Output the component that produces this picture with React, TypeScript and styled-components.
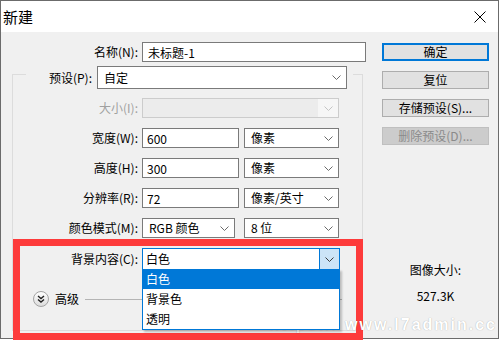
import { FC } from 'react'
import styled, { createGlobalStyle } from 'styled-components'

const GlobalStyle = createGlobalStyle`
  html, body {
    margin: 0;
    padding: 0;
    background: #ffffff;
  }
  body {
    font-family: 'Noto Sans CJK SC', 'Liberation Sans', sans-serif;
    font-size: 12px;
    line-height: 16px;
    color: #000;
  }
`

const Page = styled.div`
  position: relative;
  width: 501px;
  height: 341px;
`

const Dialog = styled.div`
  box-sizing: border-box;
  width: 499px;
  height: 339px;
  border: 1px solid #6b6b6b;
  background: #f0f0f0;
  display: flex;
  flex-direction: column;
`

const TitleBar = styled.div`
  height: 31px;
  flex: none;
  background: #ffffff;
  display: flex;
  align-items: center;
  justify-content: space-between;
  padding: 0 12px 0 2px;
`

const Title = styled.span`
  font-size: 15px;
`

const Body = styled.div`
  flex: 1;
  display: flex;
  gap: 16px;
  padding-top: 10px;
`

const LeftPane = styled.div`
  width: 365px;
  display: flex;
  flex-direction: column;
`

const Row = styled.div<{ $gap?: number }>`
  display: flex;
  align-items: center;
  gap: ${(p) => p.$gap ?? 0}px;
`

const Label = styled.label<{ $w: number; $disabled?: boolean }>`
  width: ${(p) => p.$w}px;
  flex: none;
  text-align: right;
  white-space: nowrap;
  margin-right: ${(p) => (p.$w > 100 ? 4 : 5)}px;
  color: ${(p) => (p.$disabled ? '#a0a0a0' : '#000')};
`

const Fields = styled.div<{ $gap?: number }>`
  display: flex;
  align-items: center;
  gap: ${(p) => p.$gap ?? 5}px;
`

const TextBox = styled.input<{ $w: number; $pad?: number }>`
  box-sizing: border-box;
  width: ${(p) => p.$w}px;
  height: 20px;
  margin: 0;
  border: 1px solid #7a7a7a;
  background: #ffffff;
  padding: 0 0 0 ${(p) => p.$pad ?? 4}px;
  font: inherit;
  color: #000;
  outline: none;
`

const Combo = styled.div<{ $w: number; $h?: number; $disabled?: boolean; $focused?: boolean }>`
  position: relative;
  box-sizing: border-box;
  width: ${(p) => p.$w}px;
  height: ${(p) => p.$h ?? 20}px;
  display: flex;
  align-items: stretch;
  border: 1px solid ${(p) => (p.$focused ? '#0078d7' : p.$disabled ? '#cccccc' : '#7a7a7a')};
  background: ${(p) => (p.$disabled ? '#ececec' : '#ffffff')};
`

const ComboText = styled.span<{ $pad: number }>`
  flex: 1;
  display: flex;
  align-items: center;
  padding-left: ${(p) => p.$pad}px;
  white-space: nowrap;
`

const ComboArrow = styled.span<{ $focused?: boolean; $disabled?: boolean }>`
  width: ${(p) => (p.$focused ? 19 : 19)}px;
  flex: none;
  display: flex;
  align-items: center;
  justify-content: center;
  background: ${(p) => (p.$focused ? '#cce4f7' : p.$disabled ? '#f6f6f6' : 'transparent')};
  border-left: 1px solid ${(p) => (p.$focused ? '#0078d7' : 'transparent')};
`

const DropList = styled.ul`
  position: absolute;
  top: 100%;
  left: -1px;
  right: -1px;
  margin: 0;
  padding: 0;
  list-style: none;
  background: #ffffff;
  border: 1px solid #0078d7;
  border-top: none;
  box-shadow: 2px 2px 2px rgba(0, 0, 0, 0.22);
  z-index: 3;
`

const DropItem = styled.li<{ $active?: boolean }>`
  height: 20px;
  line-height: 20px;
  padding-left: 3px;
  background: ${(p) => (p.$active ? '#0078d7' : '#ffffff')};
  color: ${(p) => (p.$active ? '#ffffff' : '#000000')};
`

const GroupBox = styled.fieldset`
  box-sizing: border-box;
  width: 351px;
  min-width: 0;
  margin: -2px 0 0 11px;
  padding: 9px 0 23px 0;
  border: 1px solid #dcdcdc;
  display: flex;
  flex-direction: column;
  gap: 10px;
`

const GroupLegend = styled.legend`
  margin-left: 13px;
  padding: 6px 6px 0 0;
`

const LegendInner = styled.span`
  display: flex;
  align-items: center;
`

const AdvancedRow = styled.div`
  display: flex;
  align-items: center;
  height: 16px;
  margin-top: 11px;
  padding-left: 20px;
`

const RoundToggle = styled.span`
  box-sizing: border-box;
  width: 16px;
  height: 16px;
  border-radius: 50%;
  border: 1px solid #a3a3a3;
  background: linear-gradient(#ffffff, #dcdcdc);
  display: flex;
  align-items: center;
  justify-content: center;
  margin-right: 6px;
`

const Divider = styled.span`
  flex: 1;
  height: 1px;
  background: #b4b4b4;
  margin: 0 20px 0 6px;
`

const RightPane = styled.div`
  width: 107px;
  display: flex;
  flex-direction: column;
  padding-top: 1px;
  gap: 10px;
`

const Button = styled.button<{ $primary?: boolean }>`
  box-sizing: border-box;
  width: 107px;
  height: 18px;
  margin: 0;
  padding: 0;
  font: inherit;
  line-height: 14px;
  color: ${(p) => (p.disabled ? '#8a8a8a' : '#000')};
  background: ${(p) => (p.disabled ? '#cccccc' : '#e1e1e1')};
  border: ${(p) => (p.$primary ? '2px solid #0078d7' : p.disabled ? '1px solid #bfbfbf' : '1px solid #adadad')};
`

const SizeInfo = styled.div`
  margin-top: 107px;
  display: flex;
  flex-direction: column;
  align-items: center;
  gap: 10px;
`

const RedFrame = styled.div`
  position: absolute;
  left: 13px;
  top: 239px;
  width: 350px;
  height: 101px;
  box-sizing: border-box;
  border: 7px solid #fd3b3b;
  z-index: 1;
  pointer-events: none;
`

const Watermark = styled.div`
  position: absolute;
  right: 4px;
  top: 316px;
  font-family: 'Liberation Sans', Arial, sans-serif;
  font-weight: bold;
  font-size: 16px;
  line-height: 18px;
  letter-spacing: 2px;
  color: #ffffff;
  text-shadow: 0 0 1px rgba(0, 0, 0, 0.35);
  white-space: pre;
  z-index: 2;
`

const Chevron: FC<{ color?: string }> = ({ color = '#5a5a5a' }) => (
  <svg width="9" height="5" viewBox="0 0 9 5">
    <polyline points="0.5,0.5 4.5,4.5 8.5,0.5" fill="none" stroke={color} strokeWidth="1" />
  </svg>
)

const CloseIcon = () => (
  <svg width="12" height="12" viewBox="0 0 12 12">
    <path d="M0.5 0.5 L11.5 11.5 M11.5 0.5 L0.5 11.5" stroke="#000" strokeWidth="1" />
  </svg>
)

const DoubleDown = () => (
  <svg width="8" height="8" viewBox="0 0 8 8">
    <polyline points="1,1 4,3.5 7,1" fill="none" stroke="#222" strokeWidth="1.4" />
    <polyline points="1,4.5 4,7 7,4.5" fill="none" stroke="#222" strokeWidth="1.4" />
  </svg>
)

interface ComboProps {
  w: number
  h?: number
  text?: string
  pad?: number
  disabled?: boolean
  focused?: boolean
  children?: React.ReactNode
}

const ComboBox: FC<ComboProps> = ({ w, h, text = '', pad = 6, disabled, focused, children }) => (
  <Combo $w={w} $h={h} $disabled={disabled} $focused={focused}>
    <ComboText $pad={pad}>{text}</ComboText>
    <ComboArrow $focused={focused} $disabled={disabled}>
      <Chevron color={disabled ? '#c4c4c4' : focused ? '#3c3c3c' : '#6a6a6a'} />
    </ComboArrow>
    {children}
  </Combo>
)

const backgrounds = ['白色', '背景色', '透明']

export default function App() {
  return (
    <Page>
      <GlobalStyle />
      <Dialog>
        <TitleBar>
          <Title>新建</Title>
          <CloseIcon />
        </TitleBar>
        <Body>
          <LeftPane>
            <Row>
              <Label $w={137}>名称(N):</Label>
              <TextBox $w={224} $pad={5} defaultValue="未标题-1" readOnly />
            </Row>
            <GroupBox>
              <GroupLegend>
                <LegendInner>
                  <Label $w={66}>预设(P):</Label>
                  <ComboBox w={250} h={23} text="自定" pad={6} />
                </LegendInner>
              </GroupLegend>
              <Row>
                <Label $w={125} $disabled>
                  大小(I):
                </Label>
                <ComboBox w={197} disabled />
              </Row>
              <Row>
                <Label $w={125}>宽度(W):</Label>
                <Fields>
                  <TextBox $w={97} defaultValue="600" readOnly />
                  <ComboBox w={95} text="像素" />
                </Fields>
              </Row>
              <Row>
                <Label $w={125}>高度(H):</Label>
                <Fields>
                  <TextBox $w={97} defaultValue="300" readOnly />
                  <ComboBox w={95} text="像素" />
                </Fields>
              </Row>
              <Row>
                <Label $w={125}>分辨率(R):</Label>
                <Fields>
                  <TextBox $w={97} defaultValue="72" readOnly />
                  <ComboBox w={95} text="像素/英寸" />
                </Fields>
              </Row>
              <Row>
                <Label $w={125}>颜色模式(M):</Label>
                <Fields $gap={9}>
                  <ComboBox w={93} text="RGB 颜色" />
                  <ComboBox w={95} text="8 位" />
                </Fields>
              </Row>
              <Row>
                <Label $w={125}>背景内容(C):</Label>
                <ComboBox w={198} h={22} text="白色" pad={3} focused>
                  <DropList>
                    {backgrounds.map((b, i) => (
                      <DropItem key={b} $active={i === 0}>
                        {b}
                      </DropItem>
                    ))}
                  </DropList>
                </ComboBox>
              </Row>
              <AdvancedRow>
                <RoundToggle>
                  <DoubleDown />
                </RoundToggle>
                <span>高级</span>
                <Divider />
              </AdvancedRow>
            </GroupBox>
          </LeftPane>
          <RightPane>
            <Button $primary>确定</Button>
            <Button>复位</Button>
            <Button>存储预设(S)...</Button>
            <Button disabled>删除预设(D)...</Button>
            <SizeInfo>
              <span>图像大小:</span>
              <span>527.3K</span>
            </SizeInfo>
          </RightPane>
        </Body>
      </Dialog>
      <RedFrame />
      <Watermark>https:// www.l7admin.cc</Watermark>
    </Page>
  )
}
